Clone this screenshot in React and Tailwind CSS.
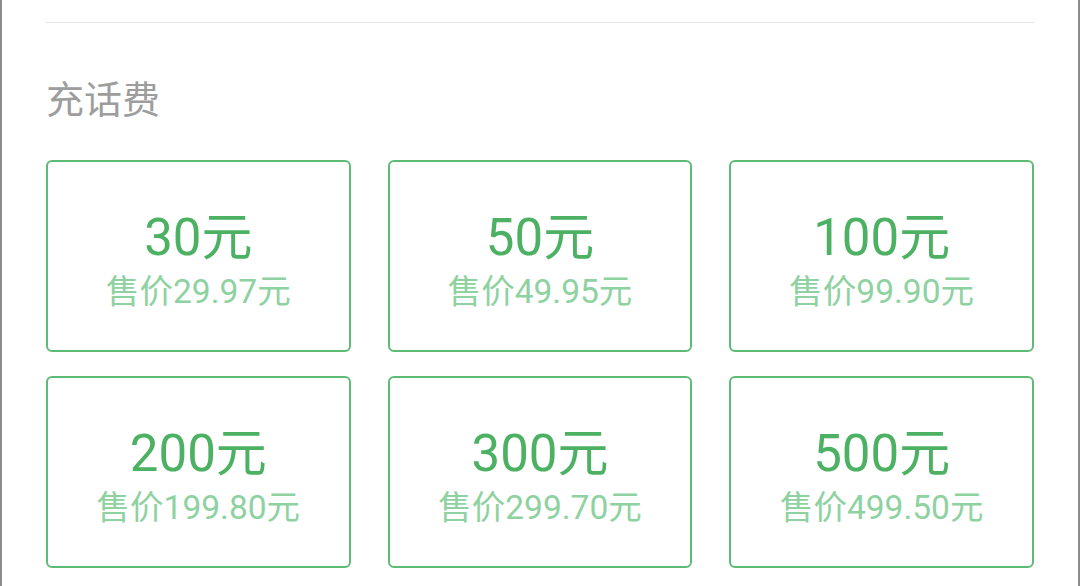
const plans = [
  { face: '30元', price: '售价29.97元' },
  { face: '50元', price: '售价49.95元' },
  { face: '100元', price: '售价99.90元' },
  { face: '200元', price: '售价199.80元' },
  { face: '300元', price: '售价299.70元' },
  { face: '500元', price: '售价499.50元' },
];

export default function App() {
  return (
    <div
      className="h-[586px] w-[1080px] overflow-hidden bg-white border-x-2 border-[#8c8c8c] px-[44px]"
      style={{ fontFamily: 'Roboto, "Noto Sans CJK SC", sans-serif' }}
    >
      <div className="h-[22px]" />
      <div className="border-t border-[#e3e3e3]" />

      {/* Section title */}
      <div className="pt-[55px] pb-[37px] text-[38px] leading-[45px] text-[#9d9d9d]">充话费</div>

      {/* Recharge options */}
      <div className="grid grid-cols-3 gap-x-[37px] gap-y-[24px]">
        {plans.map((p) => (
          <div
            key={p.face}
            className="h-[192px] rounded-[6px] border-2 border-[#5dbb74] pt-[14px] flex flex-col items-center justify-center"
          >
            <div className="mt-[-6px] text-[51px] leading-[58px] text-[#4cb162]">{p.face}</div>
            <div className="mt-[5px] text-[33.5px] leading-[40px] text-[#8ed2a1]">{p.price}</div>
          </div>
        ))}
      </div>
    </div>
  );
}
